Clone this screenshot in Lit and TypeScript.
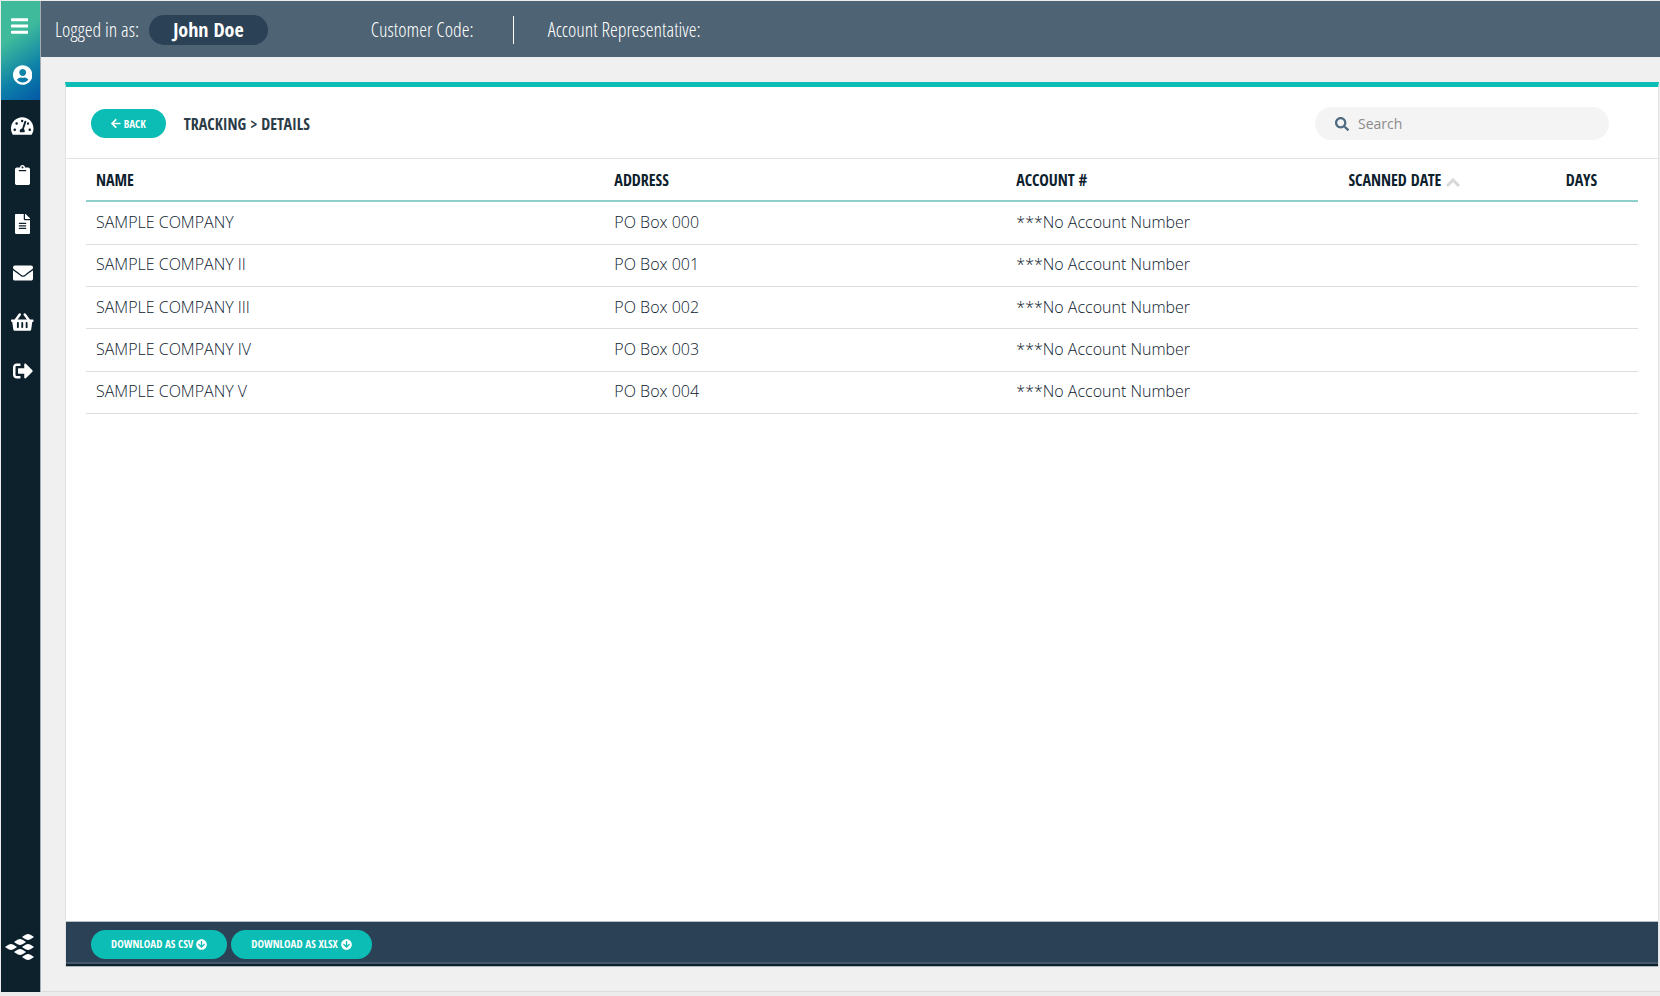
import { LitElement, html, css, svg } from "lit";
import { customElement, state } from "lit/decorators.js";

interface Glyph {
  w: number;
  d: string;
}

const ICONS: Record<string, Glyph> = {
  bars: {
    w: 448,
    d: "M16 132h416c8.837 0 16-7.163 16-16V76c0-8.837-7.163-16-16-16H16C7.163 60 0 67.163 0 76v40c0 8.837 7.163 16 16 16zm0 160h416c8.837 0 16-7.163 16-16v-40c0-8.837-7.163-16-16-16H16c-8.837 0-16 7.163-16 16v40c0 8.837 7.163 16 16 16zm0 160h416c8.837 0 16-7.163 16-16v-40c0-8.837-7.163-16-16-16H16c-8.837 0-16 7.163-16 16v40c0 8.837 7.163 16 16 16z",
  },
  user: {
    w: 496,
    d: "M248 8C111 8 0 119 0 256s111 248 248 248 248-111 248-248S385 8 248 8zm0 96c48.600 0 88 39.400 88 88s-39.400 88-88 88-88-39.400-88-88 39.400-88 88-88zm0 344c-58.700 0-111.300-26.600-146.500-68.200 18.800-35.400 55.600-59.800 98.500-59.800 2.400 0 4.800.4 7.100 1.100 13 4.200 26.600 6.900 40.900 6.900 14.300 0 28-2.700 40.900-6.900 2.300-.7 4.700-1.100 7.100-1.100 42.900 0 79.700 24.400 98.500 59.800C359.300 421.400 306.700 448 248 448z",
  },
  gauge: {
    w: 576,
    d: "M288 32C128.940 32 0 160.940 0 320c0 52.800 14.250 102.260 39.060 144.800 5.610 9.620 16.300 15.200 27.440 15.200h443c11.140 0 21.830-5.580 27.440-15.200C561.750 422.260 576 372.800 576 320c0-159.060-128.940-288-288-288zm0 64c14.710 0 26.580 10.130 30.320 23.650-1.110 2.260-2.640 4.230-3.450 6.670l-9.220 27.670c-5.130 3.490-10.970 6.010-17.640 6.010-17.670 0-32-14.330-32-32S270.330 96 288 96zM96 384c-17.670 0-32-14.330-32-32s14.330-32 32-32 32 14.330 32 32-14.330 32-32 32zm48-160c-17.670 0-32-14.330-32-32s14.330-32 32-32 32 14.330 32 32-14.330 32-32 32zm246.770-72.410l-61.330 184C343.130 347.330 352 364.540 352 384c0 11.720-3.380 22.550-8.880 32H232.880c-5.500-9.450-8.880-20.280-8.880-32 0-33.940 26.500-61.430 59.900-63.590l61.340-184.010c4.170-12.560 17.730-19.450 30.360-15.170 12.570 4.190 19.350 17.790 15.170 30.360zm14.660 57.200l15.520-46.550c3.470-1.290 7.130-2.230 11.050-2.230 17.670 0 32 14.330 32 32s-14.330 32-32 32c-11.380-.01-20.890-6.280-26.570-15.220zM480 384c-17.670 0-32-14.330-32-32s14.330-32 32-32 32 14.330 32 32-14.330 32-32 32z",
  },
  clipboard: {
    w: 384,
    d: "M384 112v352c0 26.510-21.490 48-48 48H48c-26.510 0-48-21.490-48-48V112c0-26.510 21.490-48 48-48h80c0-35.290 28.710-64 64-64s64 28.710 64 64h80c26.510 0 48 21.490 48 48zM192 40c-13.255 0-24 10.745-24 24s10.745 24 24 24 24-10.745 24-24-10.745-24-24-24m96 114v-20a6 6 0 0 0-6-6H102a6 6 0 0 0-6 6v20a6 6 0 0 0 6 6h180a6 6 0 0 0 6-6z",
  },
  file: {
    w: 384,
    d: "M224 136V0H24C10.700 0 0 10.700 0 24v464c0 13.300 10.700 24 24 24h336c13.300 0 24-10.700 24-24V160H248c-13.200 0-24-10.800-24-24zm64 236c0 6.600-5.400 12-12 12H108c-6.600 0-12-5.400-12-12v-8c0-6.600 5.400-12 12-12h168c6.600 0 12 5.400 12 12v8zm0-64c0 6.600-5.400 12-12 12H108c-6.600 0-12-5.400-12-12v-8c0-6.600 5.400-12 12-12h168c6.600 0 12 5.400 12 12v8zm0-72v8c0 6.600-5.400 12-12 12H108c-6.600 0-12-5.400-12-12v-8c0-6.600 5.400-12 12-12h168c6.600 0 12 5.400 12 12zm96-114.100v6.100H256V0h6.100c6.400 0 12.500 2.500 17 7l97.900 98c4.500 4.500 7 10.600 7 16.900z",
  },
  envelope: {
    w: 512,
    d: "M502.300 190.800c3.900-3.100 9.700-.2 9.700 4.700V400c0 26.500-21.500 48-48 48H48c-26.500 0-48-21.500-48-48V195.600c0-5 5.700-7.800 9.700-4.700 22.400 17.400 52.100 39.500 154.100 113.600 21.100 15.400 56.700 47.800 92.200 47.600 35.700.3 72-32.800 92.300-47.600 102-74.100 131.600-96.300 154-113.700zM256 320c23.200.4 56.600-29.200 73.400-41.400 132.700-96.300 142.800-104.700 173.400-128.700 5.800-4.500 9.200-11.500 9.200-18.900v-19c0-26.500-21.500-48-48-48H48c-26.500 0-48 21.500-48 48v19c0 7.400 3.400 14.300 9.200 18.900 30.600 23.900 40.700 32.400 173.400 128.700 16.800 12.200 50.200 41.800 73.400 41.400z",
  },
  basket: {
    w: 576,
    d: "M576 216v16c0 13.255-10.745 24-24 24h-8l-26.113 182.788C514.509 462.435 494.257 480 470.370 480H105.630c-23.887 0-44.139-17.565-47.518-41.212L32 256h-8c-13.255 0-24-10.745-24-24v-16c0-13.255 10.745-24 24-24h67.341l106.780-146.821c10.395-14.292 30.407-17.453 44.701-7.058 14.293 10.395 17.453 30.408 7.058 44.701L170.477 192h235.046L326.120 82.821c-10.395-14.292-7.234-34.306 7.059-44.701 14.291-10.395 34.306-7.235 44.701 7.058L484.659 192H552c13.255 0 24 10.745 24 24zM312 392V280c0-13.255-10.745-24-24-24s-24 10.745-24 24v112c0 13.255 10.745 24 24 24s24-10.745 24-24zm112 0V280c0-13.255-10.745-24-24-24s-24 10.745-24 24v112c0 13.255 10.745 24 24 24s24-10.745 24-24zm-224 0V280c0-13.255-10.745-24-24-24s-24 10.745-24 24v112c0 13.255 10.745 24 24 24s24-10.745 24-24z",
  },
  signout: {
    w: 512,
    d: "M497 273L329 441c-15 15-41 4.500-41-17v-96H152c-13.300 0-24-10.700-24-24v-96c0-13.300 10.700-24 24-24h136V88c0-21.400 25.900-32 41-17l168 168c9.300 9.400 9.300 24.600 0 34zM192 436v-40c0-6.600-5.400-12-12-12H96c-17.700 0-32-14.300-32-32V160c0-17.700 14.300-32 32-32h84c6.600 0 12-5.400 12-12V76c0-6.600-5.400-12-12-12H96c-53 0-96 43-96 96v192c0 53 43 96 96 96h84c6.600 0 12-5.400 12-12z",
  },
  search: {
    w: 512,
    d: "M505 442.700L405.300 343c-4.500-4.500-10.600-7-17-7H372c27.600-35.300 44-79.700 44-128C416 93.100 322.900 0 208 0S0 93.100 0 208s93.100 208 208 208c48.300 0 92.700-16.400 128-44v16.300c0 6.400 2.500 12.500 7 17l99.700 99.700c9.400 9.400 24.600 9.400 33.900 0l28.300-28.300c9.400-9.400 9.400-24.600.1-34zM208 336c-70.700 0-128-57.200-128-128 0-70.700 57.200-128 128-128 70.700 0 128 57.200 128 128 0 70.700-57.200 128-128 128z",
  },
  back: {
    w: 448,
    d: "M257.500 445.100l-22.200 22.200c-9.400 9.400-24.600 9.400-33.900 0L7 273c-9.400-9.400-9.400-24.600 0-33.900L201.400 44.700c9.400-9.400 24.600-9.400 33.900 0l22.200 22.200c9.500 9.500 9.300 25-.4 34.300L136.600 216H424c13.300 0 24 10.700 24 24v32c0 13.300-10.700 24-24 24H136.600l120.500 114.800c9.800 9.300 10 24.800.4 34.300z",
  },
  down: {
    w: 512,
    d: "M504 256c0 137-111 248-248 248S8 393 8 256 119 8 256 8s248 111 248 248zm-143.600-28.900L288 302.600V120c0-13.300-10.700-24-24-24h-16c-13.300 0-24 10.700-24 24v182.600l-72.400-75.500c-9.300-9.700-24.800-9.900-34.300-.4l-10.900 11c-9.400 9.400-9.400 24.600 0 33.900L239 404.300c9.400 9.400 24.600 9.400 33.900 0l132.700-132.700c9.400-9.400 9.400-24.600 0-33.900l-10.900-11c-9.500-9.500-25-9.300-34.300.4z",
  },
};

const icon = (name: string) => {
  const g = ICONS[name];
  return html`<svg class="icon" viewBox="0 0 ${g.w} 512" aria-hidden="true">
    ${svg`<path d=${g.d} />`}
  </svg>`;
};

const NAV = [
  ["gauge", "Dashboard"],
  ["clipboard", "Orders"],
  ["file", "Documents"],
  ["envelope", "Messages"],
  ["basket", "Store"],
  ["signout", "Log out"],
];

/* Centres of the six lozenges that make up the logo. */
const LOGO = [
  [23, 4], [15, 9], [6, 14], [23, 14], [15, 19], [23, 24],
];

@customElement("side-nav")
export class SideNav extends LitElement {
  static styles = css`
    :host {
      display: flex;
      flex-direction: column;
      background: #0d212d;
      border-right: 1px solid #a4adb3;
      color: #fff;
    }
    .top {
      display: grid;
      grid-template-rows: 49px 50px;
      background: linear-gradient(145deg, #3fbb9b 35%, #0c7fa9 72%, #0458a5 100%);
    }
    .link {
      display: grid;
      place-items: center;
      width: 100%;
      padding: 0 0 0 4px;
      border: 0;
      background: none;
      color: inherit;
      cursor: pointer;
      box-sizing: border-box;
    }
    .menu {
      padding: 0 2px 0 0;
    }
    .list {
      display: grid;
      grid-auto-rows: 49px;
      padding-top: 1px;
    }
    .icon {
      height: 20px;
      fill: currentColor;
      display: block;
    }
    .logo {
      margin: auto auto 31px 4px;
      width: 30px;
      height: 28px;
      fill: #fff;
      display: block;
    }
  `;

  render() {
    return html`
      <div class="top">
        <button class="link menu" aria-label="Menu">${icon("bars")}</button>
        <a class="link" href="#account" aria-label="Account">${icon("user")}</a>
      </div>
      <nav class="list">
        ${NAV.map(([name, label]) => html`<a class="link" href="#${name}" aria-label=${label}>${icon(name)}</a>`)}
      </nav>
      <svg class="logo" viewBox="0 0 30 28" aria-hidden="true">
        ${LOGO.map(([x, y]) => svg`<path d="M${x - 6} ${y}Q${x - 2} ${y - 3} ${x} ${y - 3}Q${x + 2} ${y - 3} ${x + 6} ${y}Q${x + 2} ${y + 3} ${x} ${y + 3}Q${x - 2} ${y + 3} ${x - 6} ${y}z" />`)}
      </svg>
    `;
  }
}

@customElement("app-root")
export class AppRoot extends LitElement {
  @state() private rows = ["", " II", " III", " IV", " V"].map((suffix, i) => ({
    name: `SAMPLE COMPANY${suffix}`,
    address: `PO Box 00${i}`,
    account: "***No Account Number",
  }));

  static styles = css`
    :host {
      --condensed: "Open Sans Condensed", "Noto Sans Condensed", "Liberation Sans Narrow", "Open Sans", sans-serif;
      --condensed-light: "Open Sans Condensed Light", "Open Sans Condensed", "Open Sans", sans-serif;
      display: grid;
      grid-template-columns: 40px 1fr;
      height: 100vh;
      box-sizing: border-box;
      padding: 1px 0 4px 1px;
      background: #ececec;
      font-family: "Open Sans", sans-serif;
      color: #0d212d;
    }
    .main {
      display: flex;
      flex-direction: column;
      min-width: 0;
      background: #f0f0f0;
      border-bottom: 1px solid #dcdcdc;
    }
    .topbar {
      display: flex;
      align-items: center;
      height: 56px;
      flex: none;
      box-sizing: border-box;
      padding: 2px 0 0 14px;
      background: #4e6373;
      color: #fff;
      font: 300 20px/28px var(--condensed-light);
      white-space: nowrap;
    }
    .user {
      margin: 0 103px 0 10px;
      padding: 1px 24px;
      border-radius: 15px;
      background: #2b4155;
      font-family: var(--condensed);
      font-weight: 700;
    }
    .rep {
      margin-left: 39px;
      padding-left: 34px;
      border-left: 1px solid #fff;
    }
    .card {
      display: flex;
      flex-direction: column;
      flex: 1;
      margin: 25px 1px 24px 24px;
      border: 1px solid #dfe1e2;
      border-top: 5px solid #0bbdb5;
      border-bottom: 0;
      background: #fff;
    }
    .head {
      display: flex;
      align-items: center;
      height: 69px;
      padding: 2px 49px 0 25px;
      border-bottom: 1px solid #e2e2e2;
    }
    .pill {
      display: inline-flex;
      align-items: center;
      gap: 3px;
      height: 29px;
      padding: 0 20px;
      border: 0;
      border-radius: 15px;
      background: #0bbdb5;
      color: #fff;
      font: 700 11px/16px var(--condensed);
      white-space: nowrap;
      cursor: pointer;
    }
    .pill .icon {
      height: 11px;
      fill: currentColor;
    }
    .title {
      margin: 0 auto 0 18px;
      font: 700 16px/24px var(--condensed);
      color: #2b3b47;
    }
    .search {
      display: flex;
      align-items: center;
      gap: 9px;
      width: 294px;
      height: 33px;
      box-sizing: border-box;
      padding: 0 20px;
      border-radius: 17px;
      background: #f4f4f4;
    }
    .search .icon {
      height: 14px;
      fill: #4e6a80;
    }
    .field {
      flex: 1;
      min-width: 0;
      padding: 0;
      border: 0;
      outline: 0;
      background: none;
      font: 400 14px/20px "Open Sans", sans-serif;
      color: #0d212d;
    }
    .field::placeholder {
      color: #8b8b8b;
    }
    .body {
      flex: 1;
      padding: 0 20px;
    }
    .table {
      width: 100%;
      height: 255px;
      table-layout: fixed;
      border-collapse: collapse;
      text-align: left;
    }
    .table th,
    .table td {
      box-sizing: border-box;
      padding: 0 10px;
      border-bottom: 1px solid #dedede;
      white-space: nowrap;
    }
    .table th {
      height: 42px;
      border-bottom: 2px solid #8fd0cd;
      font: 700 16px/22px var(--condensed);
    }
    .table td {
      padding-bottom: 2px;
      font: 300 16px/22px "Open Sans", sans-serif;
    }
    .c1 { width: 33.4%; }
    .c2 { width: 25.9%; }
    .c3 { width: 21.4%; }
    .c4 { width: 14%; }
    .sort {
      width: 14px;
      height: 9px;
      margin-left: 5px;
      vertical-align: -1px;
      fill: none;
      stroke: #d8d8d8;
      stroke-width: 3;
    }
    .foot {
      display: flex;
      align-items: center;
      gap: 4px;
      flex: none;
      height: 41px;
      box-sizing: border-box;
      padding: 4px 0 0 25px;
      border-top: 1px solid #b8c0c7;
      background: #2b4155;
    }
    .base {
      height: 2px;
      border-top: 2px solid #465a6b;
      border-bottom: 1px solid #a9b4bd;
      background: #0d212d;
    }
  `;

  render() {
    return html`
      <side-nav></side-nav>
      <div class="main">
        <header class="topbar">
          <span>Logged in as:</span>
          <span class="user">John Doe</span>
          <span>Customer Code:</span>
          <span class="rep">Account Representative:</span>
        </header>
        <main class="card">
          <div class="head">
            <button class="pill">${icon("back")}BACK</button>
            <h1 class="title">TRACKING &gt; DETAILS</h1>
            <label class="search">
              ${icon("search")}
              <input class="field" type="search" placeholder="Search" aria-label="Search" />
            </label>
          </div>
          <div class="body">
            <table class="table">
              <thead>
                <tr>
                  <th class="c1">NAME</th>
                  <th class="c2">ADDRESS</th>
                  <th class="c3">ACCOUNT #</th>
                  <th class="c4" aria-sort="ascending">SCANNED DATE<svg class="sort" viewBox="0 0 14 9" aria-hidden="true"><path d="M1 8L7 2L13 8" /></svg></th>
                  <th>DAYS</th>
                </tr>
              </thead>
              <tbody>
                ${this.rows.map(
                  (r) => html`<tr><td>${r.name}</td><td>${r.address}</td><td>${r.account}</td><td></td><td></td></tr>`
                )}
              </tbody>
            </table>
          </div>
          <footer class="foot">
            <button class="pill">DOWNLOAD AS CSV${icon("down")}</button>
            <button class="pill">DOWNLOAD AS XLSX${icon("down")}</button>
          </footer>
          <div class="base"></div>
        </main>
      </div>
    `;
  }
}
